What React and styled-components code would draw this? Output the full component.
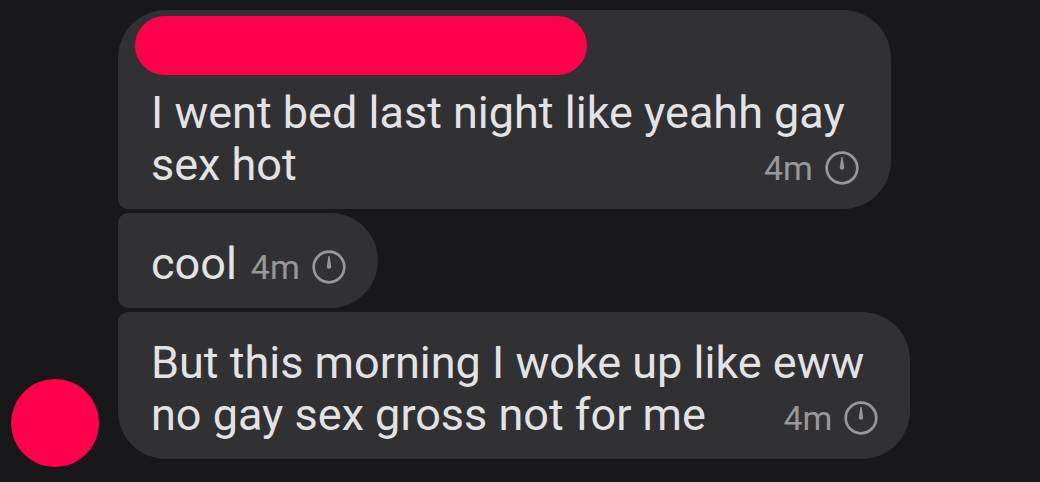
import React from "react";
import styled, { createGlobalStyle } from "styled-components";

const GlobalStyle = createGlobalStyle`
  * { box-sizing: border-box; }
  body {
    margin: 0;
    background: #18181a;
    color: #e3e3e5;
    font-family: Roboto, sans-serif;
  }
`;

const Conversation = styled.main`
  display: flex;
  align-items: flex-end;
  gap: 19px;
  padding: 10px 11px 23px;
`;

const Avatar = styled.div`
  flex: none;
  width: 88px;
  height: 88px;
  margin-bottom: -8px;
  border-radius: 50%;
  background: #ff004a;
`;

const Messages = styled.div`
  display: flex;
  flex: 1;
  flex-direction: column;
  align-items: flex-start;
  gap: 4px;
`;

const corners = {
  first: "48px 48px 48px 10px",
  middle: "10px 48px 48px 10px",
  last: "10px 48px 48px 48px",
};

const Bubble = styled.article`
  padding: ${(p) => (p.$named ? "6px" : "25px")} 32px 18px 33px;
  border-radius: ${(p) => corners[p.$place]};
  background: #313133;
`;

const SenderName = styled.div`
  width: 452px;
  height: 59px;
  margin: 0 0 12px -16px;
  border-radius: 30px;
  background: #ff004a;
`;

const Line = styled.div`
  padding-right: 14px;
  font-size: 45px;
  line-height: 52px;
  white-space: nowrap;
`;

const LastLine = styled.div`
  display: flex;
  justify-content: space-between;
  align-items: baseline;
  font-size: 45px;
  line-height: 52px;
  white-space: nowrap;
`;

const Meta = styled.span`
  display: flex;
  align-items: center;
  gap: 12px;
  padding-left: 14px;
  color: #98989a;
  font-size: 34px;
  line-height: 40px;
`;

function TimerIcon() {
  return (
    <svg width="34" height="34" viewBox="0 0 34 34" fill="none" aria-hidden="true">
      <circle cx="17" cy="17" r="15.3" stroke="currentColor" strokeWidth="2.7" />
      <path
        d="M16.4 6 H17.6 L19.2 16.6 Q19.2 18.8 17 18.8 Q14.8 18.8 14.8 16.6 Z"
        fill="currentColor"
      />
    </svg>
  );
}

function Message({ lines, place, named }) {
  const last = lines[lines.length - 1];
  return (
    <Bubble $place={place} $named={named}>
      {named && <SenderName />}
      {lines.slice(0, -1).map((line) => (
        <Line key={line}>{line}</Line>
      ))}
      <LastLine>
        <span>{last}</span>
        <Meta>
          <time>4m</time>
          <TimerIcon />
        </Meta>
      </LastLine>
    </Bubble>
  );
}

export default function App() {
  return (
    <>
      <GlobalStyle />
      <Conversation>
        <Avatar />
        <Messages>
          <Message place="first" named lines={["I went bed last night like yeahh gay", "sex hot"]} />
          <Message place="middle" lines={["cool"]} />
          <Message
            place="last"
            lines={["But this morning I woke up like eww", "no gay sex gross not for me"]}
          />
        </Messages>
      </Conversation>
    </>
  );
}
